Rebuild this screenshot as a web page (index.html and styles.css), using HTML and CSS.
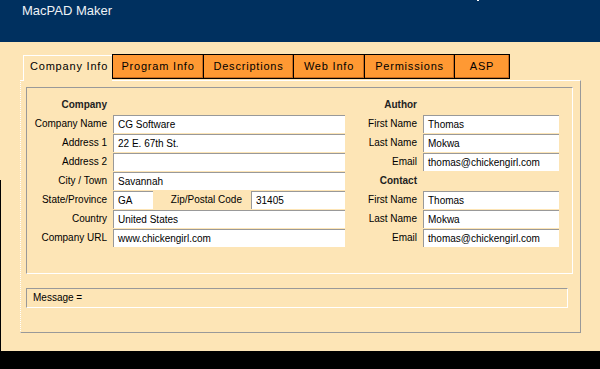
FILE: index.html
```html
<!DOCTYPE html>
<html>
<head>
<meta charset="utf-8">
<title>MacPAD Maker</title>
<link rel="stylesheet" href="styles.css">
</head>
<body>
<div class="header">
  <span class="title">MacPAD Maker</span>
  <span class="mark"></span>
</div>
<div class="main">
  <div class="tabs">
    <div class="tab active">Company Info</div>
    <div class="tab t-program">Program Info</div>
    <div class="tab t-desc">Descriptions</div>
    <div class="tab t-web">Web Info</div>
    <div class="tab t-perm">Permissions</div>
    <div class="tab t-asp">ASP</div>
  </div>
  <div class="panel">
    <div class="frame">
      <div class="col col-left">
        <div class="row head"><span class="lbl">Company</span></div>
        <div class="row"><span class="lbl">Company Name</span><span class="inp">CG Software</span></div>
        <div class="row"><span class="lbl">Address 1</span><span class="inp">22 E. 67th St.</span></div>
        <div class="row"><span class="lbl">Address 2</span><span class="inp"></span></div>
        <div class="row"><span class="lbl">City / Town</span><span class="inp">Savannah</span></div>
        <div class="row"><span class="lbl">State/Province</span><span class="inp inp-state">GA</span><span class="lbl lbl-zip">Zip/Postal Code</span><span class="inp inp-zip">31405</span></div>
        <div class="row"><span class="lbl">Country</span><span class="inp">United States</span></div>
        <div class="row"><span class="lbl">Company URL</span><span class="inp">www.chickengirl.com</span></div>
      </div>
      <div class="col col-right">
        <div class="row head"><span class="lbl">Author</span></div>
        <div class="row"><span class="lbl">First Name</span><span class="inp">Thomas</span></div>
        <div class="row"><span class="lbl">Last Name</span><span class="inp">Mokwa</span></div>
        <div class="row"><span class="lbl">Email</span><span class="inp">thomas@chickengirl.com</span></div>
        <div class="row head"><span class="lbl">Contact</span></div>
        <div class="row"><span class="lbl">First Name</span><span class="inp">Thomas</span></div>
        <div class="row"><span class="lbl">Last Name</span><span class="inp">Mokwa</span></div>
        <div class="row"><span class="lbl">Email</span><span class="inp">thomas@chickengirl.com</span></div>
      </div>
    </div>
    <div class="message">Message =</div>
  </div>
</div>
<div class="footer"></div>
</body>
</html>
```
FILE: styles.css
```css
html, body {
  margin: 0;
  padding: 0;
}
body {
  width: 600px;
  height: 369px;
  overflow: hidden;
  font-family: "Liberation Sans", Arial, sans-serif;
  font-size: 10px;
  color: #000;
  background: #000;
}
.header {
  position: relative;
  height: 42px;
  box-sizing: border-box;
  padding: 2px 0 0 22px;
  background: #00305f;
}
.title {
  font-size: 13px;
  line-height: 17px;
  color: #eef2f6;
}
.mark {
  position: absolute;
  left: 477px;
  top: 0;
  width: 2px;
  height: 1px;
  background: #fff;
}
.main {
  position: relative;
  height: 309px;
  box-sizing: border-box;
  padding-top: 12px;
  background: #fde5b6;
}
.main::before {
  content: "";
  position: absolute;
  left: 0;
  top: 138px;
  bottom: 0;
  width: 1px;
  background: #000;
}
.tabs {
  display: flex;
  align-items: flex-start;
  margin-left: 23px;
  height: 26px;
}
.tab {
  box-sizing: border-box;
  height: 25px;
  font-size: 11px;
  letter-spacing: 0.8px;
  line-height: 23px;
  text-align: center;
  color: #000;
  background: #ff9933;
  border: 1px solid #000;
  box-shadow: inset -1px -1px 0 #c86a1c;
  margin-left: -1px;
  white-space: nowrap;
}
.tab.active {
  position: relative;
  z-index: 1;
  margin: 1px 0 -1px 0;
  width: 89px;
  height: 26px;
  line-height: 21px;
  text-align: left;
  padding-left: 6px;
  border: 0;
  border-top: 1px solid #fff;
  border-left: 1px solid #fff;
  box-shadow: none;
  background: #fde5b6;
}
.tab.t-program { width: 92px; margin-left: 0; }
.tab.t-desc { width: 91px; }
.tab.t-web { width: 72px; }
.tab.t-perm { width: 91px; }
.tab.t-asp { width: 56px; }
.panel {
  box-sizing: border-box;
  width: 561px;
  height: 253px;
  margin-left: 20px;
  padding: 6px 0 0 5px;
  border-top: 1px solid #fff;
  border-left: 1px dotted #fff;
  border-right: 1px solid #999;
  border-bottom: 1px solid #999;
}
.frame {
  box-sizing: border-box;
  display: flex;
  width: 547px;
  height: 187px;
  padding-top: 8px;
  border-top: 1px solid #999;
  border-left: 1px solid #999;
  border-right: 1px solid #fff;
  border-bottom: 1px solid #fff;
}
.col-left { width: 318px; }
.col-right { width: 214px; }
.row {
  display: flex;
  height: 18px;
  margin-bottom: 1px;
}
.lbl {
  flex: none;
  width: 80px;
  margin-right: 6px;
  text-align: right;
  line-height: 18px;
  white-space: nowrap;
}
.col-right .lbl { width: 72px; }
.head .lbl {
  font-weight: bold;
  color: #222;
}
.inp {
  box-sizing: border-box;
  flex: none;
  width: 232px;
  height: 18px;
  padding-left: 4px;
  line-height: 17px;
  background: #fff;
  border-top: 1px solid #999;
  border-left: 1px solid #999;
  white-space: nowrap;
}
.col-right .inp { width: 136px; }
.inp.inp-state { width: 40px; }
.lbl.lbl-zip { width: 89px; margin-right: 9px; }
.inp.inp-zip { width: 94px; }
.message {
  box-sizing: border-box;
  width: 542px;
  height: 20px;
  margin-top: 14px;
  padding-left: 6px;
  line-height: 17px;
  border-top: 1px solid #999;
  border-left: 1px solid #999;
  border-right: 1px solid #fff;
  border-bottom: 1px solid #fff;
}
.footer {
  height: 18px;
  background: #000;
}
```
